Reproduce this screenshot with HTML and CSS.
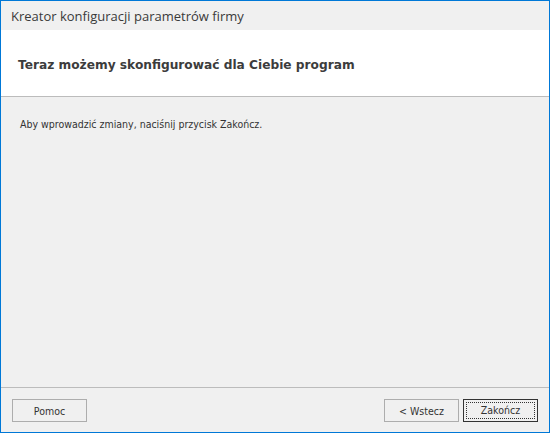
FILE: index.html
```html
<!DOCTYPE html>
<html lang="pl">
<head>
<meta charset="utf-8">
<link rel="stylesheet" href="styles.css">
</head>
<body>
<div class="window">
  <div class="titlebar">Kreator konfiguracji parametrów firmy</div>
  <div class="header">Teraz możemy skonfigurować dla Ciebie program</div>
  <div class="content">Aby wprowadzić zmiany, naciśnij przycisk Zakończ.</div>
  <div class="footer">
    <button class="btn">Pomoc</button>
    <div class="spacer"></div>
    <button class="btn">&lt; Wstecz</button>
    <button class="btn default"><span class="focus">Zakończ</span></button>
  </div>
</div>
</body>
</html>
```
FILE: styles.css
```css
html, body {
  margin: 0;
  padding: 0;
  width: 550px;
  height: 433px;
  overflow: hidden;
}
.window {
  box-sizing: border-box;
  width: 550px;
  height: 433px;
  border: 1px solid #0078d7;
  background: #f0f0f0;
  display: flex;
  flex-direction: column;
  color: #333;
}
.titlebar {
  height: 29px;
  padding-left: 10px;
  font-family: "Open Sans", sans-serif;
  font-size: 13px;
  line-height: 31px;
  color: #3a3a3a;
  background: #f0f0f0;
}
.header {
  background: #fff;
  height: 66px;
  border-bottom: 1px solid #bcbcbc;
  padding-left: 17px;
  font-family: "DejaVu Sans", sans-serif;
  font-weight: bold;
  font-size: 12.2px;
  line-height: 70px;
  color: #3c3c3c;
}
.content {
  flex: 1;
  padding: 21px 0 0 19px;
  font-family: "DejaVu Sans Condensed", "DejaVu Sans", sans-serif;
  font-size: 10.5px;
  color: #333;
  border-bottom: 1px solid #bcbcbc;
}
.footer {
  height: 44px;
  display: flex;
  align-items: flex-start;
  padding: 11px 11px 0 11px;
  box-sizing: border-box;
  gap: 4px;
}
.spacer { flex: 1; }
.btn {
  box-sizing: border-box;
  width: 75px;
  height: 23px;
  margin: 0;
  padding: 0;
  background: #f0f0f0;
  border: 1px solid #adadad;
  font-family: "DejaVu Sans Condensed", "DejaVu Sans", sans-serif;
  font-size: 10.5px;
  color: #333;
}
.btn.default {
  border: 1px solid #333;
  padding: 2px;
}
.focus {
  display: block;
  height: 100%;
  box-sizing: border-box;
  border: 1px dotted #333;
  line-height: 15px;
}
```
